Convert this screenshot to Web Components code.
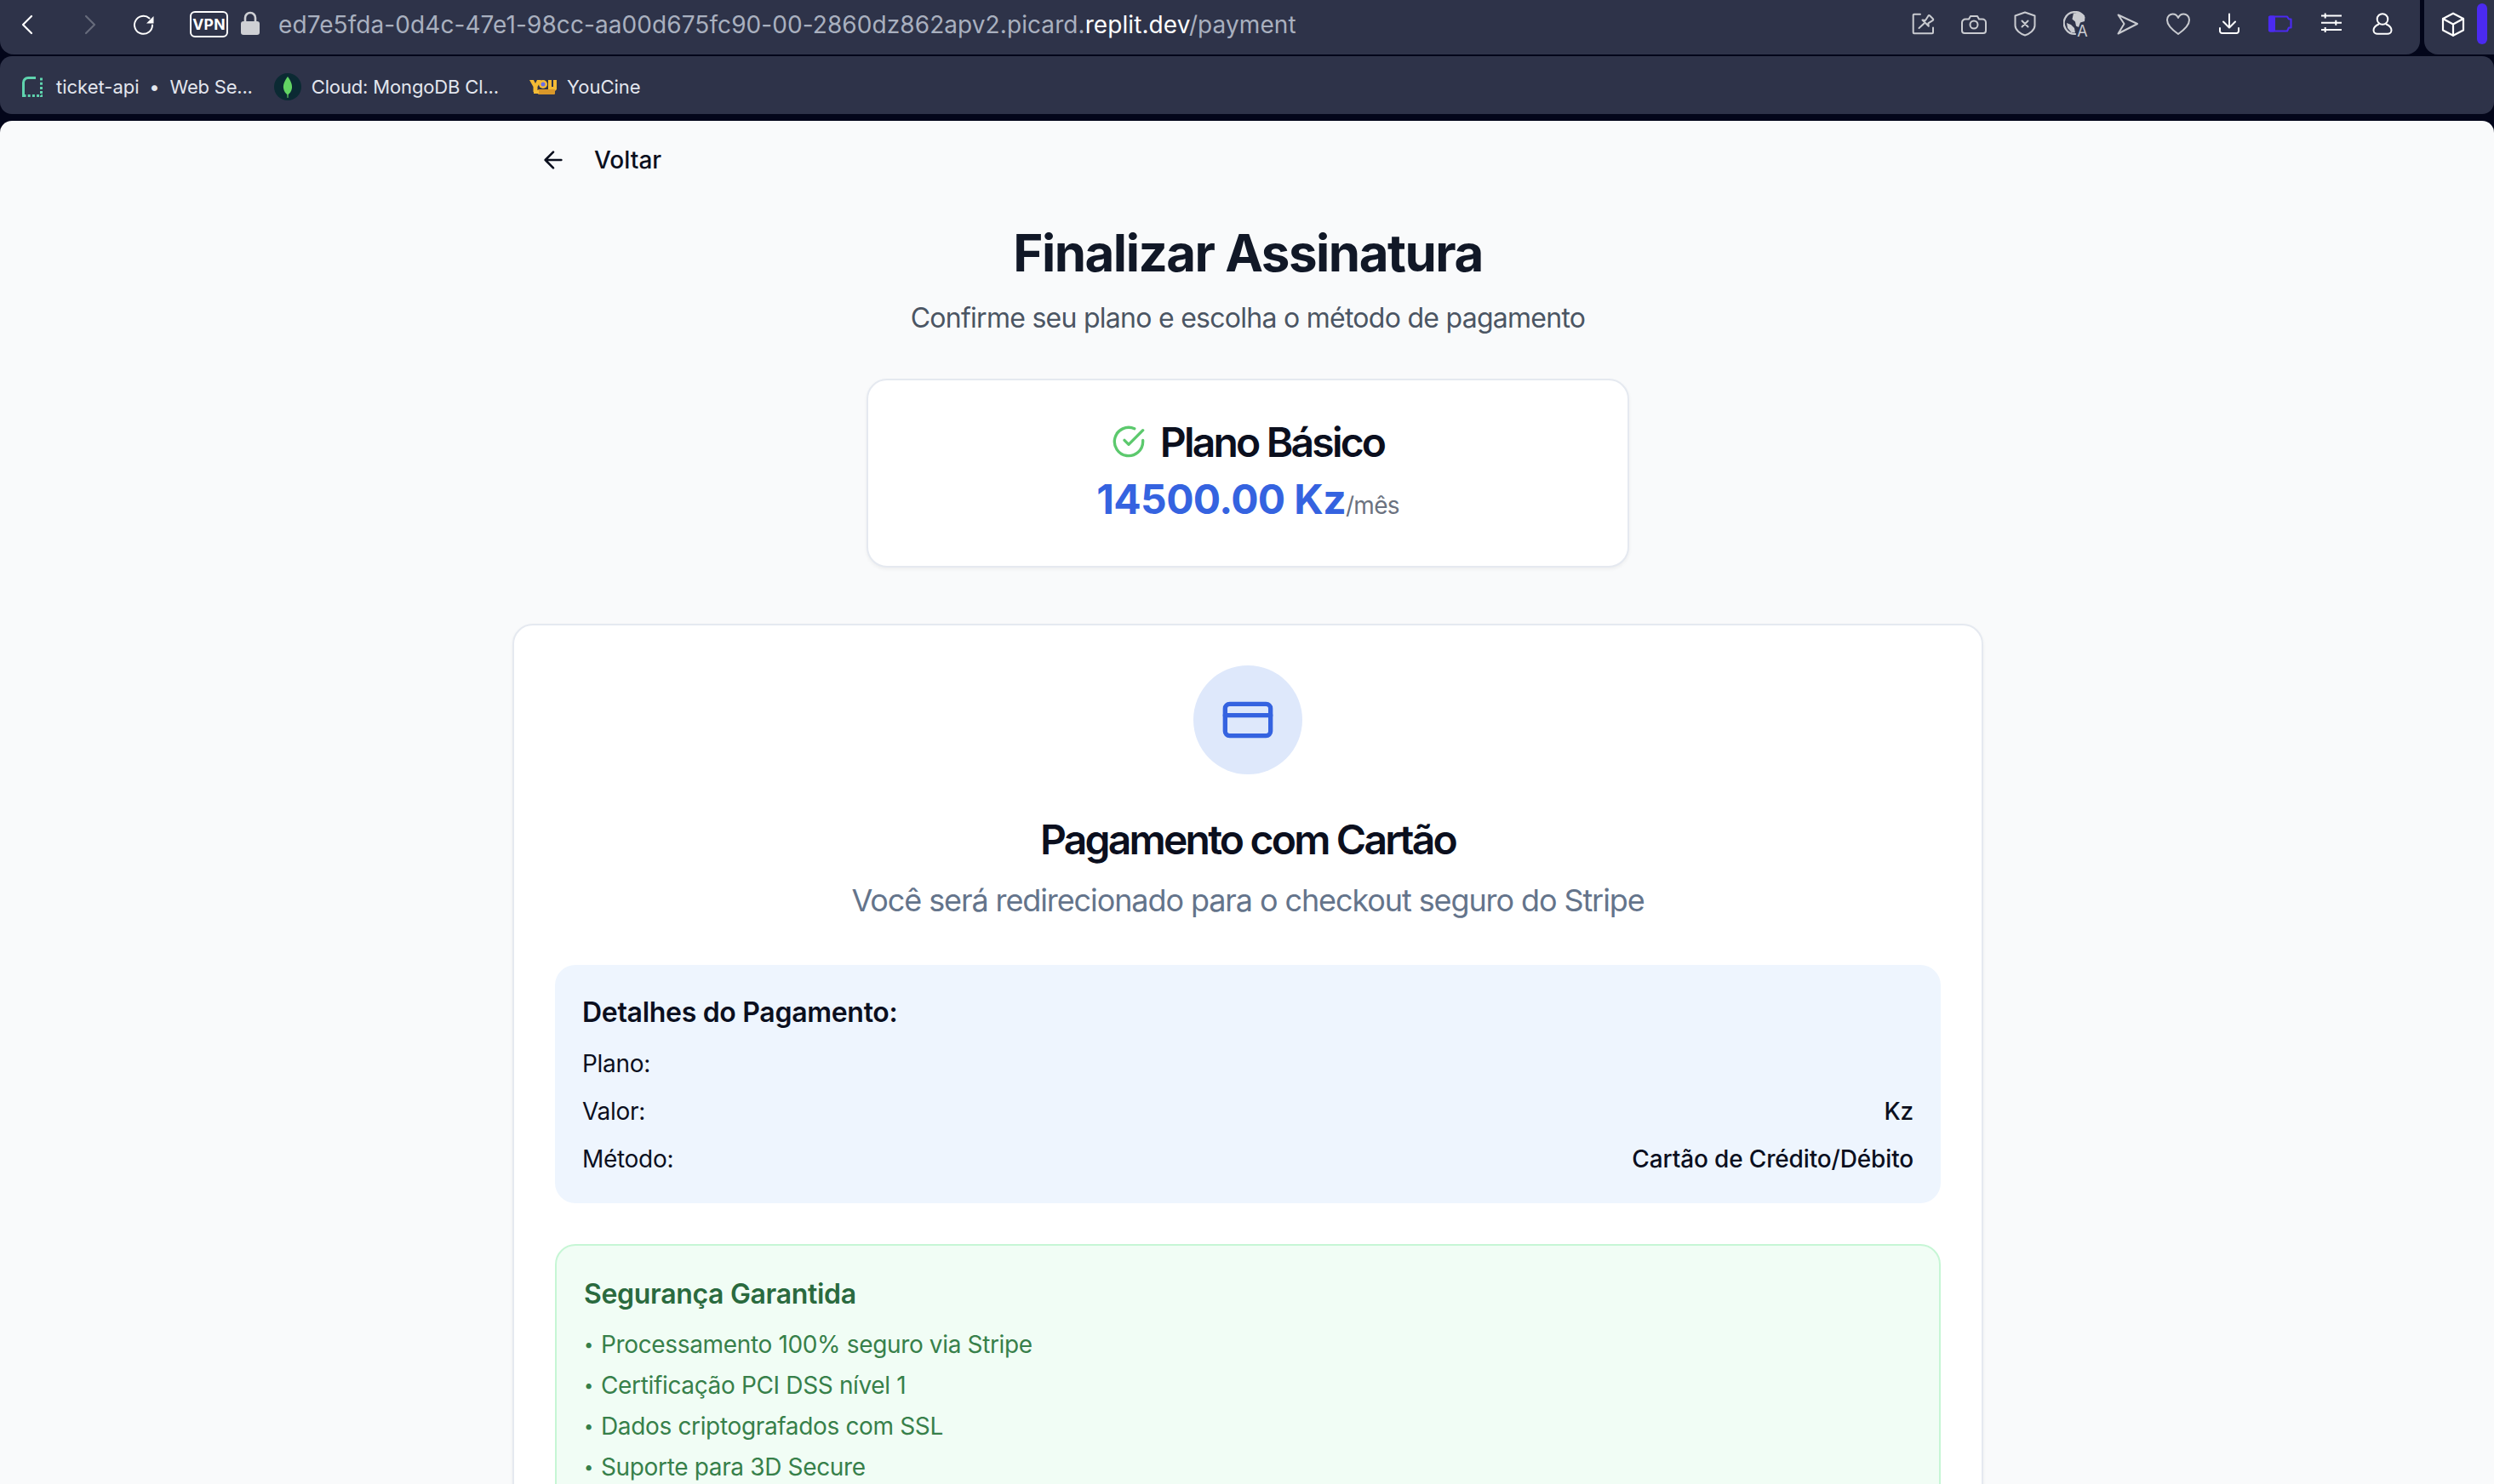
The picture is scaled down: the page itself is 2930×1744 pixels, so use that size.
<!DOCTYPE html>
<html lang="pt">
<head>
<meta charset="utf-8">
<title>Finalizar Assinatura</title>
<style>
html,body{margin:0;padding:0;width:2930px;height:1744px;overflow:hidden;background:#03061a;font-family:Inter,"Liberation Sans",sans-serif;-webkit-font-smoothing:antialiased}
</style>
</head>
<body>
<browser-frame>
  <browser-toolbar slot="toolbar" host-gray="ed7e5fda-0d4c-47e1-98cc-aa00d675fc90-00-2860dz862apv2.picard." host-white="replit.dev" path="/payment"></browser-toolbar>
  <bookmark-bar slot="bookmarks">
    <bookmark-item icon="render">ticket-api<span style="display:inline-block;width:36px;text-align:center">•</span><span style="letter-spacing:-.2px">Web Se...</span></bookmark-item>
    <bookmark-item icon="mongo" style="margin-left:25px;letter-spacing:-.15px">Cloud: MongoDB Cl...</bookmark-item>
    <bookmark-item icon="youcine" style="margin-left:36px">YouCine</bookmark-item>
  </bookmark-bar>
  <payment-page slot="page">
    <back-button>Voltar</back-button>
    <page-heading title-text="Finalizar Assinatura" sub-text="Confirme seu plano e escolha o método de pagamento"></page-heading>
    <plan-card name="Plano Básico" price="14500.00 Kz" period="/mês"></plan-card>
    <checkout-card heading="Pagamento com Cartão" sub="Você será redirecionado para o checkout seguro do Stripe">
      <details-box heading="Detalhes do Pagamento:">
        <detail-row label="Plano:"></detail-row>
        <detail-row label="Valor:" value="Kz"></detail-row>
        <detail-row label="Método:" value="Cartão de Crédito/Débito"></detail-row>
      </details-box>
      <security-box heading="Segurança Garantida">
        <security-item>Processamento 100% seguro via Stripe</security-item>
        <security-item>Certificação PCI DSS nível 1</security-item>
        <security-item>Dados criptografados com SSL</security-item>
        <security-item>Suporte para 3D Secure</security-item>
      </security-box>
    </checkout-card>
  </payment-page>
</browser-frame>

<script>
const ICONS = {
  back:`<path d="M20 6 10 16l10 10" stroke="#fff" stroke-width="2.2"/>`,
  forward:`<path d="M10 6l10 10-10 10" stroke="#666b7b" stroke-width="2.2"/>`,
  reload:`<path d="M22.500 8.500A10.500 10.500 0 1 0 26 16.500" stroke="#fff" stroke-width="2"/><path d="M27.500 6V14.500H19Z" fill="#fff"/>`,
  pin:`<g stroke="#c9cbd0" stroke-width="2"><path d="M12 3.7H4.7a1 1 0 0 0-1 1V25.3a1 1 0 0 0 1 1H26a1 1 0 0 0 1-1V19.5"/><path d="M10.5 20l6-5.5"/><path d="M14.5 10.5l3.5.5 3.5-5.500a1 1 0 0 1 1.500-.2l4 4a1 1 0 0 1-.2 1.500l-5.500 3.500.5 3.500z"/></g>`,
  camera:`<g stroke="#c9cbd0" stroke-width="2"><path d="M5 9.500H9L11 6H19L21 9.500H25a4 4 0 0 1 4 4V23a3 3 0 0 1-3 3H4a3 3 0 0 1-3-3V13.500a4 4 0 0 1 4-4z"/><circle cx="15" cy="16" r="4.500"/></g>`,
  shield:`<g stroke="#c9cbd0" stroke-width="2"><path d="M15 1.500 26.500 5.500V17C26.500 22.500 20 27 15 28.500 10 27 3.500 22.500 3.500 17V5.500Z"/><path d="M11.500 11.500l7 7M18.500 11.500l-7 7"/></g>`,
  globe:`<path d="M24 6A13 13 0 1 0 14 27" stroke="#c9cbd0" stroke-width="2.200"/><path d="M12 2.500 20 1.500 25.500 7 25 12 20 13.500 18 19 15 17.500 14 12.500 10.500 9.500ZM4 14 9 16 13 20 14 25.500 9.500 25 5 20Z" fill="#c9cbd0"/><text x="16.200" y="29.500" font-family="Inter,sans-serif" font-size="18" font-weight="400" fill="#c9cbd0">A</text>`,
  send:`<path d="M4.500 4.500 27 15 4.500 26.500 11.500 15Z" stroke="#c9cbd0" stroke-width="2"/>`,
  heart:`<path d="M15 27C5 20 2 15 2 10.500 2 6 5.500 3.500 8.500 3.500 11.500 3.500 14 5.500 15 8 16 5.500 18.500 3.500 21.500 3.500 24.500 3.500 28 6 28 10.500 28 15 25 20 15 27Z" stroke="#c9cbd0" stroke-width="2"/>`,
  download:`<g stroke="#fff" stroke-width="2"><path d="M15 3.500V19M8 12.500l7 7 7-7"/><path d="M4 20v3.500A2.500 2.500 0 0 0 6.500 26H23.500A2.500 2.500 0 0 0 26 23.500V20"/></g>`,
  battery:`<path d="M3 6.500H23l2 3h2.500v10H25l-2 4H3a1 1 0 0 1-1-1V7.500a1 1 0 0 1 1-1Z" stroke="#4b2af0" stroke-width="2.200"/><rect x="1" y="5.500" width="8" height="19" rx="2" fill="#4b2af0"/>`,
  sliders:`<g stroke="#fff" stroke-width="2" stroke-linecap="butt"><path d="M3 5.500H27M3 13.700H27M3 22H27"/><path d="M7.700 2.500v6M20.300 10.700v6M7.700 19v6"/></g>`,
  user:`<g stroke="#fff" stroke-width="2"><circle cx="15" cy="9.500" r="6.300"/><path d="M10.500 15.500C6 17.500 4.500 20 4.500 22.500 4.500 25.500 7 26.800 9 26.800H21C23 26.800 25.500 25.500 25.500 22.500 25.500 20 24 17.500 19.500 15.500"/></g>`,
  cube:`<g stroke="#fff" stroke-width="2.200"><path d="M15 2.700 27 9V22.500L15 28.700 3 22.500V9Z"/><path d="M3 9 15 15.500 27 9M15 15.500V28.700"/></g>`
};
const svg30 = n => `<svg width="30" height="44" viewBox="0 0 30 44" fill="none" stroke-linecap="round" stroke-linejoin="round" aria-hidden="true">${ICONS[n]}</svg>`;

function comp(tag, css, html){
  customElements.define(tag, class extends HTMLElement{
    constructor(){super();this.attachShadow({mode:'open'});}
    connectedCallback(){
      const a = n => this.getAttribute(n) ?? '';
      this.shadowRoot.innerHTML = `<style>${css}</style>${typeof html==='function'?html(a):html}`;
    }
  });
}

comp('browser-frame',`
  :host{display:flex;flex-direction:column;width:2930px;height:1744px;overflow:hidden;background:#03061a}
  .page{flex:1;min-height:0;margin-top:8px;background:#f9fafb;border-radius:14px 14px 0 0;overflow:hidden}
`,`<slot name="toolbar"></slot><slot name="bookmarks"></slot><div class="page"><slot name="page"></slot></div>`);

comp('browser-toolbar',`
  :host{display:flex;height:64px;width:2930px;gap:5px;font-family:Inter,sans-serif}
  .main{flex:1;display:flex;align-items:flex-start;background:#2e3349;border-radius:0 0 16px 16px;min-width:0}
  .side{width:82px;height:64px;background:#2e3349;border-radius:0 0 0 16px;display:flex;align-items:flex-start;position:relative}
  .ic{display:flex;width:30px;margin-top:13px;flex:none}
  .nav1{margin-left:17px}.nav2{margin-left:44px}.nav3{margin-left:32px}
  .vpn{box-sizing:border-box;margin:13px 0 0 40px;width:45px;height:31px;border:2px solid #fff;border-radius:6px;color:#fff;font-size:17.500px;font-weight:700;display:flex;align-items:center;justify-content:center;flex:none;letter-spacing:.2px}
  .lock{margin:13px 0 0 15px;flex:none;display:flex}
  .url{margin:0 0 0 22px;font-size:28px;line-height:58px;color:#a9b0bf;white-space:nowrap;letter-spacing:.08px;flex:1}
  .url b{font-weight:400;color:#fff}
  .tools{display:flex;margin-right:14px;flex:none}
  .tools span{display:flex;justify-content:center;width:60px;margin-top:13px}
  .cube{display:flex;margin:13px 0 0 19px}
  .pill{position:absolute;left:62px;top:4px;width:12px;height:48px;border-radius:6px;background:#4b2af0}
`,a=>`
  <div class="main">
    <span class="ic nav1">${svg30('back')}</span><span class="ic nav2">${svg30('forward')}</span><span class="ic nav3">${svg30('reload')}</span>
    <span class="vpn">VPN</span>
    <span class="lock"><svg width="22" height="28" viewBox="0 0 22 28" fill="none"><path d="M5 13V8a6 6 0 0 1 12 0v5" stroke="#cfd0d4" stroke-width="2.600"/><rect x="0" y="12" width="22" height="16" rx="3" fill="#cfd0d4"/></svg></span>
    <span class="url">${a('host-gray')}<b>${a('host-white')}</b>${a('path')}</span>
    <span class="tools">${['pin','camera','shield','globe','send','heart','download','battery','sliders','user'].map(n=>`<span>${svg30(n)}</span>`).join('')}</span>
  </div>
  <div class="side"><span class="cube">${svg30('cube')}</span><span class="pill"></span></div>`);

comp('bookmark-bar',`
  :host{display:flex;align-items:center;box-sizing:border-box;width:2930px;height:68px;margin-top:2px;padding-left:26px;background:#2e3349;border-radius:14px;color:#e3e6ee;font-size:22px}
`,`<slot></slot>`);

const BM = {
  render:`<svg width="24" height="24" viewBox="0 0 24 24" fill="none"><path d="M1.500 24V7A5.500 5.500 0 0 1 7 1.500H16" stroke="#5fd3ae" stroke-width="3"/><path d="M22.500 1.500V24M1.500 22.500H24" stroke="#5fd3ae" stroke-width="3" stroke-dasharray="3 2.200"/></svg>`,
  mongo:`<svg width="32" height="32" viewBox="0 0 32 32"><circle cx="16" cy="16" r="16" fill="#0b2a33"/><path d="M16 4C19.500 9 21.500 13 21 17.500 20.500 21.500 18 24 16.700 25L16.500 29H15.500L15.300 25C14 24 11.500 21.500 11 17.500 10.500 13 12.500 9 16 4Z" fill="#62d463"/></svg>`,
  youcine:`<svg width="32" height="18" viewBox="0 0 32 18"><path d="M0 1H5L7 5 9 1H14L9.500 9V15H4.500V9Z" fill="#f3bb35"/><circle cx="16" cy="6" r="5" fill="#f3bb35"/><circle cx="16" cy="6" r="2.500" fill="#6b6ee8"/><path d="M22 1H26V9H28V1H32V12L30 14H24L22 12Z" fill="#f3bb35"/><rect x="10" y="12" width="20" height="6" rx="1" fill="#d9982a"/><rect x="5" y="13" width="6" height="4" fill="#f3bb35"/></svg>`
};
comp('bookmark-item',`
  :host{display:inline-flex;align-items:center;box-sizing:border-box;height:68px;padding-top:4px;white-space:nowrap}
  .i{display:flex;flex:none}
`,a=>`<span class="i" style="margin-right:${a('icon')==='render'?16:12}px">${BM[a('icon')]}</span><slot></slot>`);

comp('payment-page',`
  :host{display:block;box-sizing:border-box;width:2930px;padding:7px 0 0 2px;color:#0b0f1e;font-family:Inter,sans-serif}
  .c{width:1728px;margin:0 auto;display:flex;flex-direction:column}
`,`<div class="c"><slot></slot></div>`);

comp('back-button',`
  :host{display:flex;align-items:center;height:78px;padding-left:32px;font-size:28px;font-weight:500;color:#0b0f1e}
  svg{display:block;margin-right:32px}
`,`<svg width="32" height="32" viewBox="0 0 24 24" fill="none" stroke="#0b0f1e" stroke-width="2" stroke-linecap="round" stroke-linejoin="round"><path d="M12 19l-7-7 7-7M19 12H5"/></svg><slot></slot>`);

comp('page-heading',`
  :host{display:block;text-align:center;padding-top:34px}
  h1{margin:0;font-size:60px;line-height:72px;font-weight:700;color:#111827;letter-spacing:-1.500px}
  p{margin:13px 0 0;font-size:32px;line-height:56px;color:#4b5563;letter-spacing:-.73px}
`,a=>`<h1>${a('title-text')}</h1><p>${a('sub-text')}</p>`);

comp('plan-card',`
  :host{display:block;box-sizing:border-box;width:896px;height:222px;margin:43px auto 0;background:#fff;border:2px solid #e5e9f0;border-radius:24px;box-shadow:0 2px 4px rgba(0,0,0,.05);text-align:center}
  .t{display:flex;align-items:center;justify-content:center;height:64px;margin-top:40px;font-size:48px;font-weight:600;letter-spacing:-2.800px;color:#0b0f1e}
  svg{margin-right:17px;display:block}
  .p{height:72px;line-height:72px;white-space:nowrap}
  .a{font-size:48px;font-weight:700;color:#3563e0;letter-spacing:-.65px}
  .m{font-size:28px;color:#6b7280;letter-spacing:-.75px}
`,a=>`<div class="t"><svg width="40" height="40" viewBox="0 0 24 24" fill="none" stroke="#5cc96d" stroke-width="2" stroke-linecap="round" stroke-linejoin="round"><path d="M22 11.080V12a10 10 0 1 1-5.930-9.140"/><path d="M22 4 12 14.010l-3-3"/></svg>${a('name')}</div><div class="p"><span class="a">${a('price')}</span><span class="m">${a('period')}</span></div>`);

comp('checkout-card',`
  :host{display:block;box-sizing:border-box;width:1728px;margin-top:66px;padding:47px 48px 48px;background:#fff;border:2px solid #e5e9f0;border-radius:24px;box-shadow:0 2px 4px rgba(0,0,0,.05)}
  .ci{width:128px;height:128px;border-radius:50%;background:#dee8fb;margin:0 auto;display:flex;align-items:center;justify-content:center}
  h2{margin:45px 0 0;text-align:center;font-size:48px;line-height:64px;font-weight:600;letter-spacing:-2.800px;color:#0b0f1e}
  p{margin:11px 0 48px;text-align:center;font-size:36px;line-height:56px;color:#64748b;letter-spacing:-1.100px}
`,a=>`<div class="ci"><svg width="64" height="64" viewBox="0 0 24 24" fill="none" stroke="#3563e0" stroke-width="2" stroke-linecap="round" stroke-linejoin="round"><rect x="2" y="5" width="20" height="14" rx="2"/><path d="M2 10h20"/></svg></div><h2>${a('heading')}</h2><p>${a('sub')}</p><slot></slot>`);

comp('details-box',`
  :host{display:flex;flex-direction:column;gap:16px;padding:32px;background:#eef5fe;border-radius:24px}
  h3{margin:0;font-size:32px;line-height:48px;font-weight:600;color:#0b0f1e;letter-spacing:-.3px}
`,a=>`<h3>${a('heading')}</h3><slot></slot>`);

comp('detail-row',`
  :host{display:flex;justify-content:space-between;font-size:28px;line-height:40px;color:#0b0f1e;letter-spacing:-.15px}
  span{letter-spacing:-.3px}
  b{font-weight:500}
`,a=>`<span>${a('label')}</span><b>${a('value')}</b>`);

comp('security-box',`
  :host{display:block;margin-top:48px;padding:32px;background:#f1fdf5;border:2px solid #c6f6d5;border-radius:24px}
  h3{margin:1px 0 15px;font-size:32px;line-height:48px;font-weight:600;color:#2a6a3e;letter-spacing:-.32px}
  .l{display:flex;flex-direction:column;gap:8px}
`,a=>`<h3>${a('heading')}</h3><div class="l"><slot></slot></div>`);

comp('security-item',`
  :host{display:flex;font-size:28px;line-height:40px;color:#37804a;letter-spacing:-.35px}
  .b{width:20px;font-size:20px;flex:none}
`,`<span class="b">•</span><slot></slot>`);
</script>
</body>
</html>
